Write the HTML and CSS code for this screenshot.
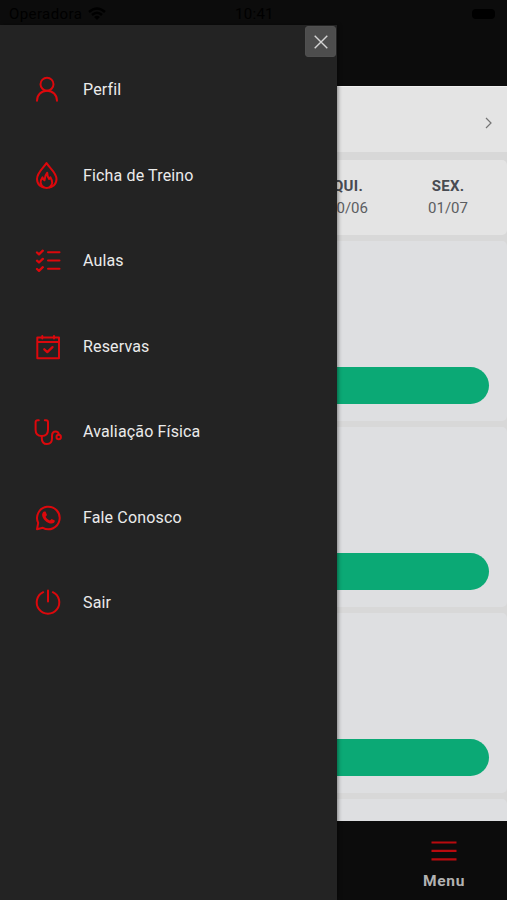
FILE: index.html
```html
<!DOCTYPE html>
<html lang="pt-BR">
<head>
<meta charset="utf-8">
<title>Menu</title>
<link rel="stylesheet" href="styles.css">
</head>
<body>
<div class="app">
  <header class="header">
    <div class="status">
      <span class="carrier">Operadora</span>
      <svg class="wifi" width="18" height="14" viewBox="0 0 18 14"><path d="M1 5Q9-2 17 5M4 8q5-4.500 10 0" fill="none" stroke="currentColor" stroke-width="2.400"/><path d="M6 10q3-2.500 6 0l-3 3z"/></svg>
      <span class="time">10:41</span>
      <span class="battery"></span>
    </div>
  </header>
  <main class="content">
    <section class="selector">
      <svg width="8" height="12" viewBox="0 0 8 12"><path d="M1 1l5 5-5 5" fill="none" stroke="currentColor" stroke-width="1.200"/></svg>
    </section>
    <section class="days">
      <div class="day"><b>QUI.</b><span>30/06</span></div>
      <div class="day"><b>SEX.</b><span>01/07</span></div>
    </section>
    <section class="class-card"><div class="action"></div></section>
    <section class="class-card"><div class="action"></div></section>
    <section class="class-card"><div class="action"></div></section>
    <section class="class-card"></section>
  </main>
  <footer class="tabs">
    <div class="tab">
      <svg width="26" height="20" viewBox="0 0 26 20"><path d="M.5 1.500h25M.5 9.900h25M.5 18.300h25" stroke="currentColor" stroke-width="2.200"/></svg>
      <span>Menu</span>
    </div>
  </footer>
</div>

<aside class="drawer">
  <button class="close" aria-label="Fechar"><svg width="14" height="14" viewBox="0 0 14 14"><path d="M.7.7l12.600 12.600M13.300.7L.7 13.300" stroke="currentColor" stroke-width="1.400"/></svg></button>
  <nav class="menu">
    <a class="item"><svg class="icon" viewBox="0 0 30 30"><circle cx="14" cy="10.200" r="6.500"/><path d="M4 26.800c0-6 4.300-10.100 10-10.100s10 4.100 10 10.100"/></svg><span>Perfil</span></a>
    <a class="item"><svg class="icon" viewBox="0 0 30 30"><path d="M13.500 3C11 7.500 4 12.500 4 19c0 5.500 4 9 9.700 9s9.800-3.500 9.800-9C23.500 12.500 16 7.500 13.500 3z"/><path d="M11 27.300c-4.200-2.300-4.200-6.300-1.500-10 .5 1.700 1 2.500 2 3 .2-3.200 1-5.700 2.700-7.500.1 3 .7 4.700 2 6.200.7-.4 1-1 1.200-1.800 2.500 4 2.500 7.800-1 10.100"/></svg><span>Ficha de Treino</span></a>
    <a class="item"><svg class="icon" viewBox="0 0 30 30"><path d="M15 7.300h11.500M15 15.500h11.500M15 23.800h11.500"/><path class="heavy" d="M4 7.500l2 1.800 3.800-3.600M4 15.700l2 1.800 3.800-3.600M4 24l2 1.800 3.800-3.600"/></svg><span>Aulas</span></a>
    <a class="item"><svg class="icon" viewBox="0 0 30 30"><path d="M4.300 6.500h21.700v20.800h-21.700zM4.300 11h21.700M9.300 5v2.500M21 5v2.500"/><path class="heavy" d="M11.300 18.300l3 2.800 5.200-5"/></svg><span>Reservas</span></a>
    <a class="item"><svg class="icon" viewBox="0 0 30 30"><path d="M5.800 4.200H4.600c-1.200 0-2 .8-2 2v7.500c0 3.800 2.200 6.300 6.200 6.300s6.200-2.500 6.200-6.300V6.200c0-1.200-.8-2-2-2h-1.200"/><path d="M8.800 20v2.200c0 3.800 1.900 5.800 5.100 5.800 3.400 0 5.100-2.200 5.100-5.500v-2.500c0-3 1.300-4.500 3.500-4.500s3.200 1.500 3.400 3.200"/><circle cx="25.700" cy="21" r="2.200"/></svg><span>Avaliação Física</span></a>
    <a class="item"><svg class="icon" viewBox="0 0 30 30"><path d="M4 27.200l1.200-6.300A11.300 11.300 0 1 1 9.800 25.800z"/><path class="solid" d="M11 9.400l1.500.2 1.500 3.300-1.400 1.900c1 1.800 2.300 3 4.200 3.800l1.900-1.700 3.100 1.600c.2 1.700-1.400 3-3.200 3.100-4.600-.2-9.200-4.600-9.500-8.700 0-1.500.7-2.900 1.900-3.500z"/></svg><span>Fale Conosco</span></a>
    <a class="item"><svg class="icon" viewBox="0 0 30 30"><path d="M10.200 5.200a11.300 11.300 0 1 0 9.600 0M15 3.500v11"/></svg><span>Sair</span></a>
  </nav>
</aside>
</body>
</html>
```
FILE: styles.css
```css
* { box-sizing: border-box; }
body {
  margin: 0;
  position: relative;
  height: 900px;
  overflow: hidden;
  background: #0c0c0c;
  font-family: Roboto, "Liberation Sans", sans-serif;
}
.app { height: 900px; display: flex; flex-direction: column; }
.header { height: 86px; flex: none; background: #0c0c0c; }
.status {
  height: 26px;
  display: flex;
  align-items: center;
  padding: 2px 12px 0 9px;
  color: #000;
  font-size: 15px;
}
.carrier { width: 74px; letter-spacing: .4px; }
.wifi { margin-left: 5px; }
.time { margin-left: 129px; letter-spacing: .3px; }
.battery { width: 23px; height: 10px; margin-left: auto; border-radius: 4px; background: #000; }
.content { flex: 1; min-height: 0; overflow: hidden; background: #d8d8d8; }
.selector {
  height: 66px;
  display: flex;
  align-items: center;
  justify-content: flex-end;
  padding: 7px 14px 0 0;
  background: #e4e4e4;
  border-top: 1px solid #f1f1f1;
  color: #747474;
}
.days {
  height: 75px;
  margin-top: 8px;
  padding: 16px 9px 0 0;
  display: flex;
  justify-content: flex-end;
  background: #e4e4e4;
  border-radius: 5px;
}
.day {
  width: 100px;
  display: flex;
  flex-direction: column;
  align-items: center;
  font-size: 15px;
  line-height: 20px;
  color: #5b5d61;
}
.day b { line-height: 20px; color: #484b52; letter-spacing: .3px; }
.day b + span { margin-top: 2px; }
.class-card {
  height: 180px;
  margin-top: 6px;
  padding: 126px 18px 0;
  border-radius: 5px;
  background: #dedfe1;
}
.action { height: 37px; border-radius: 19px; background: #0ba975; }
.tabs {
  height: 79px;
  flex: none;
  display: flex;
  justify-content: flex-end;
  background: #0c0c0c;
}
.tab {
  width: 126px;
  padding-top: 20px;
  display: flex;
  flex-direction: column;
  align-items: center;
  color: #b90a0e;
}
.tab span {
  margin-top: 10px;
  color: #b2b2b2;
  font-size: 15.500px;
  line-height: 20px;
  font-weight: 700;
  letter-spacing: .7px;
}
.drawer {
  position: absolute;
  top: 25px;
  left: 0;
  width: 337px;
  height: 875px;
  background: #232323;
  box-shadow: 1px 0 4px rgba(0, 0, 0, .45);
}
.close {
  position: absolute;
  top: 1px;
  right: 1px;
  width: 31px;
  height: 31px;
  display: grid;
  place-items: center;
  padding: 0;
  border: 1px solid #505050;
  border-radius: 3px;
  background: #4d4d4d;
  color: #d4d4d4;
}
.menu { display: flex; flex-direction: column; padding: 21.5px 0 0 33px; }
.item {
  height: 85.500px;
  display: flex;
  align-items: center;
  gap: 20px;
  color: #ebebeb;
  font-size: 16px;
  line-height: 20px;
  letter-spacing: .15px;
}
.item span { padding-top: 2px; }
.icon {
  width: 30px;
  height: 30px;
  fill: none;
  stroke: #dc080c;
  stroke-width: 2;
  stroke-linecap: round;
  stroke-linejoin: round;
}
.icon .heavy { stroke-width: 2.300; }
.icon .solid { fill: #dc080c; stroke: none; }
```
